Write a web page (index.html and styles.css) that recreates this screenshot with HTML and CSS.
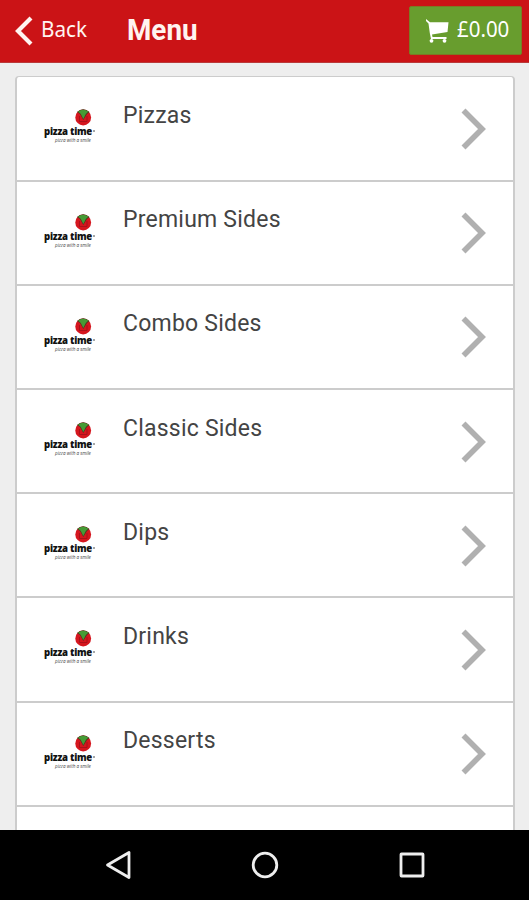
FILE: index.html
```html
<!DOCTYPE html>
<html lang="en">
<head>
<meta charset="utf-8">
<title>Menu</title>
<link rel="stylesheet" href="styles.css">
</head>
<body>
<svg class="defs" aria-hidden="true">
  <symbol id="tomato" viewBox="0 0 18 18">
    <ellipse cx="9.2" cy="9.4" rx="7.9" ry="8" fill="#d5161e"/>
    <path d="M3 4Q9-1.5 15.5 4L13 6L9.3 12L6 6Z" fill="#4a3a21"/>
    <path d="M4 3.5Q9 .2 14.5 3.5L11.8 6L9.3 11L6.8 6Z" fill="#459b35"/>
    <path d="M5.5 8V13.5H13V8" fill="none" stroke="#a01018" stroke-width=".8"/>
  </symbol>
  <symbol id="chevron" viewBox="0 0 26 44">
    <path d="M2.5 3.5L21 22L2.5 40.5" fill="none" stroke="#b0b0b0" stroke-width="5.6"/>
  </symbol>
</svg>
<div class="screen">
  <header class="bar">
    <a class="back">
      <svg width="20" height="32" viewBox="0 0 20 32"><path d="M17 3L4 16L17 29" fill="none" stroke="#fff4f0" stroke-width="4.2"/></svg>
      <span class="back-label">Back</span>
    </a>
    <h1 class="title">Menu</h1>
    <a class="basket">
      <svg width="24" height="24" viewBox="0 0 24 24"><path d="M1 0L5 3.2H23.5L22.5 13L7 15.5L7.5 18H21.5V20H6L4.8 14L3.5 4.5L1 2Z" fill="#fff"/><circle cx="6.5" cy="21.8" r="1.9" fill="#fff"/><circle cx="19.5" cy="21.8" r="1.9" fill="#fff"/></svg>
      <span class="total">£0.00</span>
    </a>
  </header>
  <main class="content">
    <ul class="menu">
      <li class="row"><span class="logo"><svg class="tomato"><use href="#tomato"/></svg><b class="logo-name">pizza time</b><i class="logo-tag">pizza with a smile</i></span><span class="name">Pizzas</span><svg class="chevron"><use href="#chevron"/></svg></li>
      <li class="row"><span class="logo"><svg class="tomato"><use href="#tomato"/></svg><b class="logo-name">pizza time</b><i class="logo-tag">pizza with a smile</i></span><span class="name">Premium Sides</span><svg class="chevron"><use href="#chevron"/></svg></li>
      <li class="row"><span class="logo"><svg class="tomato"><use href="#tomato"/></svg><b class="logo-name">pizza time</b><i class="logo-tag">pizza with a smile</i></span><span class="name">Combo Sides</span><svg class="chevron"><use href="#chevron"/></svg></li>
      <li class="row"><span class="logo"><svg class="tomato"><use href="#tomato"/></svg><b class="logo-name">pizza time</b><i class="logo-tag">pizza with a smile</i></span><span class="name">Classic Sides</span><svg class="chevron"><use href="#chevron"/></svg></li>
      <li class="row"><span class="logo"><svg class="tomato"><use href="#tomato"/></svg><b class="logo-name">pizza time</b><i class="logo-tag">pizza with a smile</i></span><span class="name">Dips</span><svg class="chevron"><use href="#chevron"/></svg></li>
      <li class="row"><span class="logo"><svg class="tomato"><use href="#tomato"/></svg><b class="logo-name">pizza time</b><i class="logo-tag">pizza with a smile</i></span><span class="name">Drinks</span><svg class="chevron"><use href="#chevron"/></svg></li>
      <li class="row"><span class="logo"><svg class="tomato"><use href="#tomato"/></svg><b class="logo-name">pizza time</b><i class="logo-tag">pizza with a smile</i></span><span class="name">Desserts</span><svg class="chevron"><use href="#chevron"/></svg></li>
      <li class="row"></li>
    </ul>
  </main>
  <nav class="system">
    <svg width="30" height="32" viewBox="0 0 30 32"><path d="M4.5 16L26 3.5V28.5Z"/></svg>
    <svg width="30" height="32" viewBox="0 0 30 32"><circle cx="15" cy="16" r="11.8"/></svg>
    <svg width="30" height="32" viewBox="0 0 30 32"><rect x="4" y="5" width="22" height="22" rx=".5"/></svg>
  </nav>
</div>
</body>
</html>
```
FILE: styles.css
```css
* { box-sizing: border-box; }
body { margin: 0; }
.defs { position: absolute; width: 0; height: 0; }
.screen {
  display: flex;
  flex-direction: column;
  width: 529px;
  height: 900px;
  overflow: hidden;
  background: #eee;
  font-family: Roboto, sans-serif;
}
.bar {
  display: flex;
  flex: none;
  height: 63px;
  padding: 0 7px 0 14px;
  background: #cb1316;
  border-bottom: 1px solid #b93a3a;
  color: #fff4f0;
}
.back { display: flex; width: 113px; padding-top: 15px; }
.back-label {
  margin: -1px 0 0 7px;
  font: 22px/28px "Noto Sans", sans-serif;
  transform: scaleX(.94);
  transform-origin: left;
}
.title {
  margin: 14px 0 0;
  font-size: 29px;
  line-height: 32px;
  font-weight: 700;
  transform: scaleX(.96);
  transform-origin: left;
}
.basket {
  display: flex;
  width: 113px;
  height: 49px;
  margin: 6px 0 0 auto;
  padding: 12px 0 0 15px;
  background: #689d2e;
  border: 1px solid #7c7a24;
  border-radius: 2px;
  color: #fff;
}
.total {
  margin: -4px 0 0 8px;
  font: 22.5px/28px "Noto Sans", sans-serif;
  transform: scaleX(.91);
  transform-origin: left;
}
.content { flex: 1; min-height: 0; padding: 13.4px 14px 0 15px; overflow: hidden; }
.menu {
  margin: 0;
  padding: 0;
  list-style: none;
  background: #fff;
  border: 2px solid #ccc;
  border-top-width: 1px;
  border-radius: 4px 4px 0 0;
}
.row {
  display: flex;
  height: 104.2px;
  padding: 0 26px 0 26px;
  border-bottom: 2px solid #ccc;
}
.logo {
  display: flex;
  flex-direction: column;
  width: 54px;
  margin-top: 31px;
  white-space: nowrap;
}
.tomato { width: 18px; height: 18px; margin-left: 31px; }
.logo-name {
  width: 54px;
  padding-left: 1px;
  font: 800 9.6px/12px "Open Sans", sans-serif;
  letter-spacing: -.25px;
  color: #111;
}
.logo-name::after {
  content: "";
  display: inline-block;
  width: 2px;
  height: 2px;
  margin: 0 0 3px 1px;
  border-radius: 1px;
  background: #888;
}
.logo-tag { padding-left: 12px; font: italic 4.6px/5px "Open Sans", sans-serif; color: #444; }
.name {
  margin: 23.6px 0 0 26px;
  font-size: 23px;
  line-height: 30px;
  letter-spacing: .22px;
  color: #444;
}
.chevron { width: 26px; height: 44px; margin: 29.7px 0 0 auto; }
.system {
  display: flex;
  flex: none;
  justify-content: space-between;
  height: 70px;
  padding: 19px 102px 0 103px;
  background: #000;
}
.system svg { fill: none; stroke: #eee; stroke-width: 2.8; stroke-linejoin: round; }
```
